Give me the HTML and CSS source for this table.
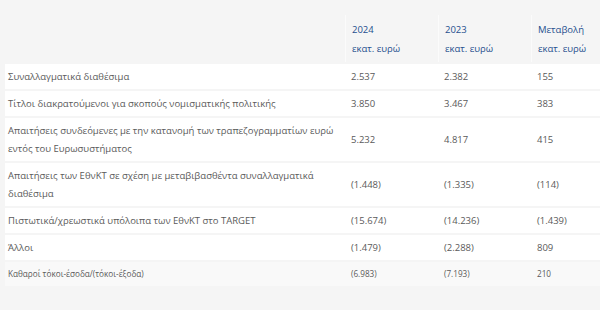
FILE: index.html
```html
<!DOCTYPE html>
<html lang="el">
<head>
<meta charset="utf-8">
<link rel="stylesheet" href="styles.css">
</head>
<body>
<table class="fin">
  <colgroup>
    <col class="c-label">
    <col class="c-num">
    <col class="c-num">
    <col class="c-chg">
  </colgroup>
  <thead>
    <tr>
      <th class="label"></th>
      <th class="num">2024<br>εκατ. ευρώ</th>
      <th class="num">2023<br>εκατ. ευρώ</th>
      <th class="num">Μεταβολή<br>εκατ. ευρώ</th>
    </tr>
  </thead>
  <tbody>
    <tr><td class="label">Συναλλαγματικά διαθέσιμα</td><td>2.537</td><td>2.382</td><td>155</td></tr>
    <tr><td class="label">Τίτλοι διακρατούμενοι για σκοπούς νομισματικής πολιτικής</td><td>3.850</td><td>3.467</td><td>383</td></tr>
    <tr><td class="label">Απαιτήσεις συνδεόμενες με την κατανομή των τραπεζογραμματίων ευρώ εντός του Ευρωσυστήματος</td><td>5.232</td><td>4.817</td><td>415</td></tr>
    <tr><td class="label">Απαιτήσεις των ΕθνΚΤ σε σχέση με μεταβιβασθέντα συναλλαγματικά διαθέσιμα</td><td>(1.448)</td><td>(1.335)</td><td>(114)</td></tr>
    <tr><td class="label">Πιστωτικά/χρεωστικά υπόλοιπα των ΕθνΚΤ στο TARGET</td><td>(15.674)</td><td>(14.236)</td><td>(1.439)</td></tr>
    <tr><td class="label">Άλλοι</td><td>(1.479)</td><td>(2.288)</td><td>809</td></tr>
    <tr class="total"><td class="label">Καθαροί τόκοι-έσοδα/(τόκοι-έξοδα)</td><td>(6.983)</td><td>(7.193)</td><td>210</td></tr>
  </tbody>
</table>
</body>
</html>
```
FILE: styles.css
```css
html, body {
  margin: 0;
  padding: 0;
  background: #f5f5f5;
  overflow: hidden;
}
body {
  font-family: "Open Sans", "Noto Sans", sans-serif;
  font-size: 9.5px;
  color: #5a5a5a;
  width: 600px;
  height: 310px;
}
.fin {
  margin: 13px 0 0 5px;
  width: 595px;
  border-collapse: separate;
  border-spacing: 0 2px;
  table-layout: fixed;
}
.c-label { width: 340px; }
.c-num { width: 93px; }
.c-chg { width: 69px; }
.fin th {
  text-align: left;
  font-weight: normal;
  color: #254f8e;
  line-height: 19px;
  padding: 5px 4px 4px 6px;
  border-left: 1px solid #fbfbfb;
  vertical-align: top;
  white-space: nowrap;
}
.fin th.label { border-left: none; }
.fin td {
  background: #fff;
  line-height: 18px;
  padding: 3.5px 4px 3.5px 6px;
  vertical-align: middle;
}
.fin td.label { padding-left: 3px; padding-right: 2px; }
.fin tr.total td {
  background: #f9f9f9;
  font-size: 8.2px;
  padding-top: 3px;
  padding-bottom: 3px;
}
```
